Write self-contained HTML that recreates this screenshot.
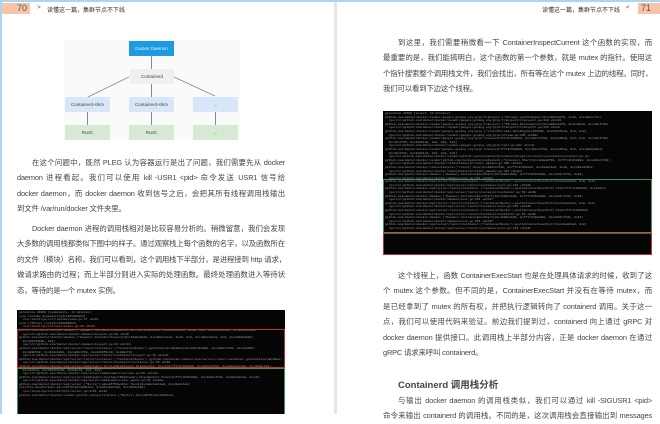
<!DOCTYPE html>
<html><head><meta charset="utf-8"><style>
*{margin:0;padding:0;box-sizing:border-box}
body{width:660px;height:414px;overflow:hidden;background:#fff;position:relative;font-family:"Liberation Sans","Noto Sans CJK SC",sans-serif;color:#4a4a4a}
.abs{position:absolute}
.p{position:absolute;font-size:7.4px;letter-spacing:-0.15px;line-height:15.4px;text-align:justify;text-align-last:justify;color:#454545;overflow:hidden}
.p span{display:block;white-space:nowrap}
.term{position:absolute;background:#050505;overflow:hidden;font-family:"Liberation Mono",monospace;font-size:3px;line-height:3.6px;color:#9a9a9a;padding:1px 2px;white-space:nowrap}
.box{position:absolute;font-size:4.5px;display:flex;align-items:center;justify-content:center;color:#444}
.ln{position:absolute;background:#888}
</style></head><body>
<div class="abs" style="left:0;top:0;width:660px;height:2px;background:#a9d6f5"></div>
<div class="abs" style="left:0;top:0;width:2px;height:414px;background:#a9d6f5"></div>
<div class="abs" style="left:334px;top:2px;width:3px;height:412px;background:#e6e6e6"></div>

<div class="abs" style="left:2px;top:3px;width:28px;height:11px;background:#f8c3a6;font-size:9px;line-height:11px;text-align:right;padding-right:3px;color:#555">70</div>
<div class="abs" style="left:37px;top:4px;font-size:6.5px;color:#555">&gt;</div>
<div class="abs" style="left:47px;top:5px;font-size:6px;color:#333">读懂这一篇，集群节点不下线</div>

<div class="abs" style="left:64px;top:40px;width:176px;height:100px;background:#fafafa"></div>
<div class="ln" style="left:151px;top:56px;width:1px;height:13px"></div>
<div class="ln" style="left:151px;top:84px;width:1px;height:13px"></div>
<svg class="abs" style="left:0;top:0" width="330" height="150"><line x1="129" y1="77" x2="88" y2="97" stroke="#888" stroke-width="0.8"/><line x1="174" y1="77" x2="215" y2="96" stroke="#888" stroke-width="0.8"/></svg>
<div class="ln" style="left:87px;top:112px;width:1px;height:13px"></div>
<div class="ln" style="left:151px;top:112px;width:1px;height:13px"></div>
<div class="ln" style="left:215px;top:112px;width:1px;height:13px"></div>
<div class="box" style="left:129px;top:41px;width:45px;height:15px;background:#1c9be2;color:#e8f4ff">Docker Daemon</div>
<div class="box" style="left:130px;top:69px;width:44px;height:15px;background:#f0f0f0">Containerd</div>
<div class="box" style="left:65px;top:97px;width:45px;height:15px;background:#d7e7f9">Containerd-shim</div>
<div class="box" style="left:129px;top:97px;width:45px;height:15px;background:#d7e7f9">Containerd-shim</div>
<div class="box" style="left:193px;top:97px;width:45px;height:15px;background:#d7e7f9">...</div>
<div class="box" style="left:65px;top:125px;width:45px;height:15px;background:#d6ead3">RunC</div>
<div class="box" style="left:129px;top:125px;width:45px;height:15px;background:#d6ead3">RunC</div>
<div class="box" style="left:193px;top:125px;width:45px;height:15px;background:#d6ead3">...</div>

<div class="p" style="left:17px;top:155px;width:268px">
<span style="padding-left:15px">在这个问题中，既然 PLEG 认为容器运行是出了问题，我们需要先从 docker</span>
<span>daemon 进程看起。我们可以使用 kill -USR1 &lt;pid&gt; 命令发送 USR1 信号给</span>
<span>docker daemon，而 docker daemon 收到信号之后，会把其所有线程调用栈输出</span>
<span style="text-align-last:left">到文件 /var/run/docker 文件夹里。</span>
</div>
<div class="p" style="left:17px;top:221px;width:268px">
<span style="padding-left:15px">Docker daemon 进程的调用栈相对是比较容易分析的。稍微留意，我们会发现</span>
<span>大多数的调用栈都类似下图中的样子。通过观察栈上每个函数的名字，以及函数所在</span>
<span>的文件（模块）名称，我们可以看到，这个调用栈下半部分，是进程接到 http 请求，</span>
<span>做请求路由的过程；而上半部分则进入实际的处理函数。最终处理函数进入等待状</span>
<span style="text-align-last:left">态，等待的是一个 mutex 实例。</span>
</div>

<div class="term" style="left:17px;top:310px;width:268px;height:104px">
goroutine 29360 [semacquire, 13 minutes]:<br>sync.runtime_Semacquire(0xc420d03db0)<br>&nbsp;&nbsp;/usr/local/go/src/runtime/sema.go:47 +0x34<br>sync.(*Mutex).Lock(0xc420d03db0)<br>&nbsp;&nbsp;/usr/local/go/src/sync/mutex.go:85 +0x9d<br>github.com/docker/docker/daemon.(*Daemon).ContainerInspectCurrent(0xc4200c4b00, 0xc4201c8ce0, 0x40, 0x0, 0xc42013c000, 0xc42013c000)<br>&nbsp;&nbsp;/go/src/github.com/docker/docker/daemon/inspect.go:40 +0x40<br>github.com/docker/docker/daemon.(*Daemon).ContainerInspect(0xc4200c4b00, 0xc4201c8ce0, 0x40, 0x0, 0xc4201c8ce0, 0x0, 0xc42016d6d0)<br>&nbsp;&nbsp;0xc42016d6d0, 0x0)<br>&nbsp;&nbsp;/go/src/github.com/docker/docker/daemon/inspect.go:29 +0x11b<br>github.com/docker/docker/api/server/router/container.(*containerRouter).getContainersByName(0xc420c4b4000, 0xc4201c1f80, 0xc42025b)<br>&nbsp;&nbsp;0xc420b5b0, 0xc420c4880, 0xc420c1f90, 0xc4202f6c40, 0x8d0cf0)<br>&nbsp;&nbsp;/go/src/github.com/docker/docker/api/server/router/container/inspect.go:15 +0x119<br>github.com/docker/docker/api/server/router/container.(*containerRouter).(github.com/docker/docker/api/server/router/container.getContainersByName)<br>&nbsp;&nbsp;/go/src/github.com/docker/docker/api/server/router/container/container.go:53 +0x60<br>github.com/docker/docker/api/server/middleware.VersionMiddleware.WrapHandler.func1(0x7f7c3c6b0880, 0xc4221c1f80, 0x2a0e2a8c1a0, 0xc42a8c1a0)<br>&nbsp;&nbsp;0xc42b5c0, 0xc4202f6c40, 0x8d0cf0, 0x0, 0x0)<br>&nbsp;&nbsp;/go/src/github.com/docker/docker/api/server/middleware/version.go:55 +0x1a9<br>github.com/docker/docker/api/server/middleware.UserAgentMiddleware.WrapHandler.func1(0x7f7c3c6b0880, 0xc4221c1f80, 0x2a0e8c1a0, 0xc42)<br>&nbsp;&nbsp;/go/src/github.com/docker/docker/api/server/middleware/user_agent.go:50 +0x2aa<br>github.com/docker/docker/api/server.(*Server).makeHTTPHandler.func1(0x2a0e2a8c1a0, 0xc42a8c1a0)<br>net/http.HandlerFunc.ServeHTTP(0xc420b1e0, 0x2a0e2a8c1a0, 0xc42a8c1a0)<br>&nbsp;&nbsp;/usr/local/go/src/net/http/server.go:1726 +0x44<br>github.com/docker/docker/vendor/github.com/gorilla/mux.(*Router).ServeHTTP(0xc420b1e0)
</div>
<div class="abs" style="left:17px;top:329px;width:268px;height:39px;border:0.8px solid #b33"></div>
<div class="abs" style="left:17px;top:368px;width:268px;height:46px;border:0.8px solid #4a8a55;border-bottom:none"></div>

<div class="abs" style="left:542px;top:5px;font-size:6px;color:#333">读懂这一篇，集群节点不下线</div>
<div class="abs" style="left:626px;top:4px;font-size:6.5px;color:#555">&lt;</div>
<div class="abs" style="left:638px;top:3px;width:22px;height:11px;background:#f8c3a6;font-size:9px;line-height:11px;padding-left:3px;color:#555">71</div>

<div class="p" style="left:383px;top:35px;width:269px">
<span style="padding-left:15px">到这里，我们需要稍微看一下 ContainerInspectCurrent 这个函数的实现，而</span>
<span>最重要的是，我们能搞明白，这个函数的第一个参数，就是 mutex 的指针。使用这</span>
<span>个指针搜索整个调用栈文件，我们会找出，所有等在这个 mutex 上边的线程。同时，</span>
<span style="text-align-last:left">我们可以看到下边这个线程。</span>
</div>

<div class="term" style="left:383px;top:111px;width:269px;height:144px">
goroutine 29360 [select, 13 minutes]:<br>github.com/docker/docker/vendor/google.golang.org/grpc/transport.(*Stream).waitOnHeader(0xc420b2b1f0, 0x20, 0xc4201c7c8)<br>&nbsp;&nbsp;/go/src/github.com/docker/docker/vendor/google.golang.org/grpc/transport/transport.go:222 +0x101<br>github.com/docker/docker/vendor/google.golang.org/grpc/transport.(*Stream).RecvCompress(0xc420b2b1f0, 0x11ed5a0, 0xc42c1f80)<br>&nbsp;&nbsp;/go/src/github.com/docker/docker/vendor/google.golang.org/grpc/transport/transport.go:233 +0x2d<br>github.com/docker/docker/vendor/google.golang.org/grpc.(*clientStream).RecvMsg(0xc420b00, 0xc4232f8e0, 0x0, 0x0)<br>&nbsp;&nbsp;/go/src/github.com/docker/docker/vendor/google.golang.org/grpc/stream.go:385 +0x69c<br>github.com/docker/docker/vendor/google.golang.org/grpc.invoke(0x7f7c3c6b0880, 0xc4221c1f80, 0x11ed5a0, 0x0, 0x0, 0xc42c1f80)<br>&nbsp;&nbsp;0xc42c1f80, 0xc420b1e0, 0x0, 0x0, 0x0)<br>&nbsp;&nbsp;/go/src/github.com/docker/docker/vendor/google.golang.org/grpc/call.go:262 +0x74c<br>github.com/docker/docker/vendor/google.golang.org/grpc.Invoke(0x7f7c3c6b0880, 0xc4221c1f80, 0x11ed5a0, 0x0, 0xc4204d22b4)<br>&nbsp;&nbsp;0xc42c1f80, 0xc420b1e0, 0x0, 0x0, 0x0)<br>&nbsp;&nbsp;/go/src/github.com/docker/docker/vendor/github.com/containerd/containerd/api/services/execution/execution.pb.go:<br>github.com/docker/docker/vendor/github.com/containerd/containerd.(*process).Start(0xc42a8a8f40, 0x7f7c3c6b0880, 0xc4201c1f80)<br>&nbsp;&nbsp;/go/src/github.com/docker/docker/libcontainerd/client_daemon.go:290 +0x2a4<br>github.com/docker/docker/libcontainerd.(*client).Exec(0xc4201c1f80, 0x7f7c3c6b0880, 0xc42a8c1a0, 0x40, 0xc4204d22b4)<br>&nbsp;&nbsp;/go/src/github.com/docker/docker/libcontainerd/client_daemon.go:383 +0x3b4<br>github.com/docker/docker/daemon.(*Daemon).ContainerExecStart(0xc4200c4b00, 0x7f7c3c6b0880, 0xc4201c1f80, 0x40)<br>&nbsp;&nbsp;/go/src/github.com/docker/docker/daemon/exec.go:251 +0xb4f<br>github.com/docker/docker/api/server/router/container.(*containerRouter).postContainerExecStart(0xc42a8c1a0, 0x0, 0x0)<br>&nbsp;&nbsp;/go/src/github.com/docker/docker/api/server/router/container/exec.go:125 +0x34b<br>github.com/docker/docker/api/server/router/container.(*containerRouter).postContainerExecStart-fm(0x7f7c3c6b0880, 0xc4201c)<br>&nbsp;&nbsp;/go/src/github.com/docker/docker/api/server/router/container/container.go:59 +0x6b<br>github.com/docker/docker/daemon.(*Daemon).ContainerExecStart(0xc4200c4b00, 0x7f7c3c6b0880, 0xc4201c1f80, 0x40)<br>&nbsp;&nbsp;/go/src/github.com/docker/docker/daemon/exec.go:251 +0xb4f<br>github.com/docker/docker/api/server/router/container.(*containerRouter).postContainerExecStart(0xc42a8c1a0, 0x0, 0x0)<br>&nbsp;&nbsp;/go/src/github.com/docker/docker/api/server/router/container/exec.go:125 +0x34b<br>github.com/docker/docker/api/server/router/container.(*containerRouter).postContainerExecStart-fm(0x7f7c3c6b0880)<br>&nbsp;&nbsp;/go/src/github.com/docker/docker/api/server/router/container/container.go:59 +0x6b<br>github.com/docker/docker/daemon.(*Daemon).ContainerExecStart(0xc4200c4b00, 0x7f7c3c6b0880, 0xc4201c1f80, 0x40)<br>&nbsp;&nbsp;/go/src/github.com/docker/docker/daemon/exec.go:251 +0xb4f<br>github.com/docker/docker/api/server/router/container.(*containerRouter).postContainerExecStart(0xc42a8c1a0, 0x0)<br>&nbsp;&nbsp;/go/src/github.com/docker/docker/api/server/router/container/exec.go:125 +0x34b
</div>
<div class="abs" style="left:383px;top:179px;width:269px;height:54px;border:0.8px solid #4a8a55"></div>
<div class="abs" style="left:383px;top:233px;width:269px;height:22px;border:0.8px solid #b33"></div>

<div class="p" style="left:383px;top:268px;width:269px">
<span style="padding-left:15px">这个线程上，函数 ContainerExecStart 也是在处理具体请求的时候，收到了这</span>
<span>个 mutex 这个参数。但不同的是，ContainerExecStart 并没有在等待 mutex，而</span>
<span>是已经拿到了 mutex 的所有权，并把执行逻辑转向了 containerd 调用。关于这一</span>
<span>点，我们可以使用代码来验证。前边我们提到过，containerd 向上通过 gRPC 对</span>
<span>docker daemon 提供接口。此调用栈上半部分内容，正是 docker daemon 在通过</span>
<span style="text-align-last:left">gRPC 请求来呼叫 containerd。</span>
</div>
<div class="abs" style="left:398px;top:377px;font-size:9.5px;font-weight:bold;color:#444;white-space:nowrap">Containerd 调用栈分析</div>
<div class="p" style="left:383px;top:393px;width:269px">
<span style="padding-left:15px">与输出 docker daemon 的调用栈类似，我们可以通过 kill -SIGUSR1 &lt;pid&gt;</span>
<span>命令来输出 containerd 的调用栈。不同的是，这次调用栈会直接输出到 messages</span>
</div>
</body></html>
